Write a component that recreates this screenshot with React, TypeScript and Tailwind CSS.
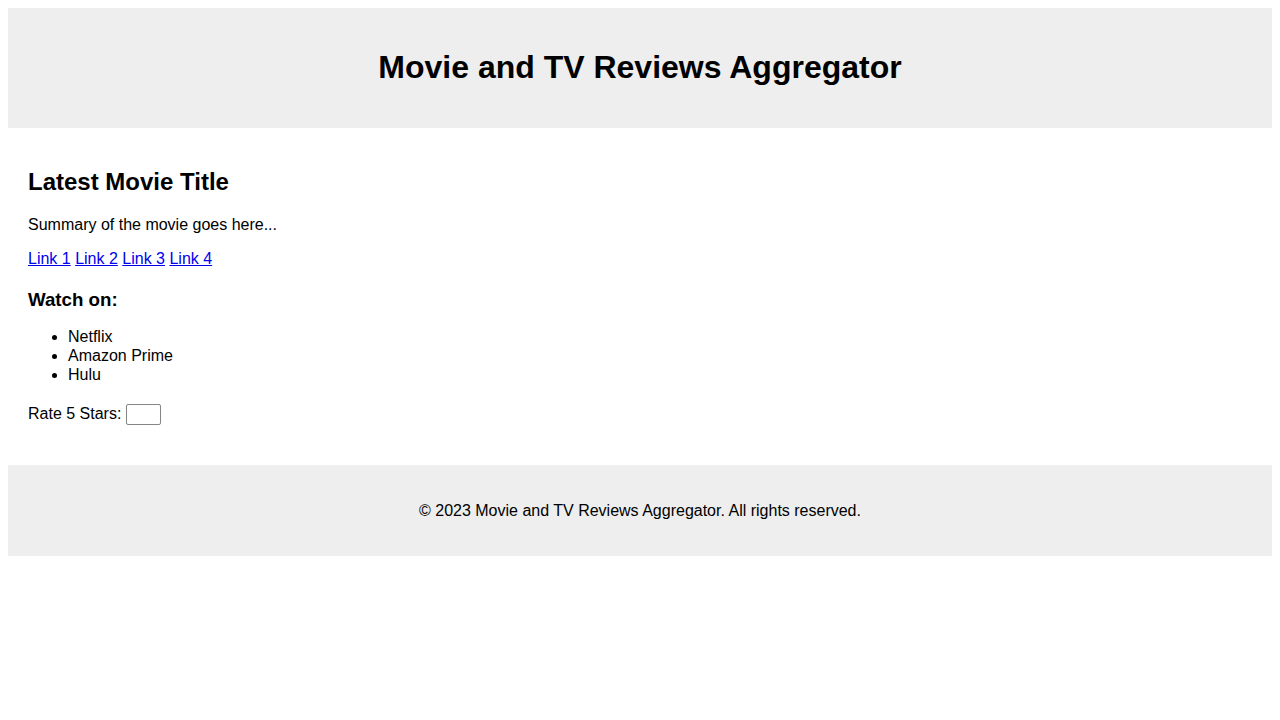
import React from "react";

export default function App() {
  return (
    <div className="p-2 bg-white text-black" style={{ fontFamily: '"Liberation Sans", Arial, sans-serif' }}>
      <header className="bg-[#eeeeee] py-[20px]">
        <h1 className="text-[32px] font-bold leading-[37px] my-[21.44px] text-center">
          Movie and TV Reviews Aggregator
        </h1>
      </header>
      <main className="p-[20px]">
        <h2 className="text-[24px] font-bold leading-[28px] mt-[20px] mb-[20px]">Latest Movie Title</h2>
        <p className="text-[16px] leading-[18.4px] mb-[16px]">Summary of the movie goes here...</p>
        <div className="text-[16px] leading-[18.4px]">
          <a href="#" className="text-[#0000ee] underline">Link 1</a>{" "}
          <a href="#" className="text-[#0000ee] underline">Link 2</a>{" "}
          <a href="#" className="text-[#0000ee] underline">Link 3</a>{" "}
          <a href="#" className="text-[#0000ee] underline">Link 4</a>
        </div>
        <h3 className="text-[18.72px] font-bold leading-[21.5px] mt-[20.72px] mb-[15.72px]">Watch on:</h3>
        <ul className="list-disc pl-[40px] text-[16px] leading-[19px]">
          <li>Netflix</li>
          <li>Amazon Prime</li>
          <li>Hulu</li>
        </ul>
        <div className="mt-[20px] mb-[20px] flex items-center h-[21px] text-[16px]">
          <label htmlFor="rate">Rate 5 Stars:</label>
          <input
            id="rate"
            type="text"
            className="ml-[5px] w-[35px] h-[21px] border border-[#858585] rounded-[2px] px-[2px] text-[13.33px]"
          />
        </div>
      </main>
      <footer className="bg-[#eeeeee] py-[20px] text-center">
        <p className="text-[16px] leading-[19px] my-[16px]">
          © 2023 Movie and TV Reviews Aggregator. All rights reserved.
        </p>
      </footer>
    </div>
  );
}
